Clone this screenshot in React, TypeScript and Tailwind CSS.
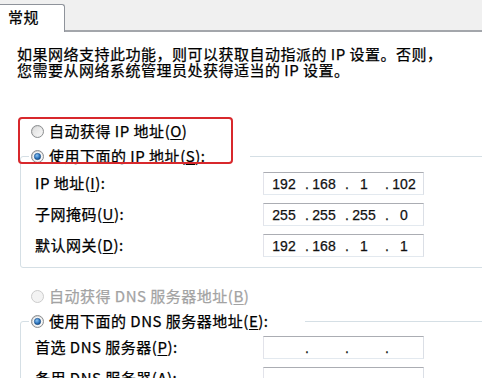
import type { ReactNode } from 'react'

const FONT = { fontFamily: '"Noto Sans CJK SC", "Noto Sans", sans-serif' }
const DIGITS = { fontFamily: '"Liberation Sans", "Noto Sans CJK SC", sans-serif' }

function Radio({ checked, disabled, id }: { checked?: boolean; disabled?: boolean; id: string }) {
  return (
    <svg width="13" height="13" viewBox="0 0 13 13" className="shrink-0">
      <defs>
        <linearGradient id={`f-${id}`} x1="0" y1="0" x2="1" y2="1">
          <stop offset="0" stopColor="#c9c9c9" />
          <stop offset="1" stopColor="#fbfbfb" />
        </linearGradient>
        <radialGradient id={`d-${id}`} cx="0.4" cy="0.35" r="0.7">
          <stop offset="0" stopColor="#8cc4f2" />
          <stop offset="0.6" stopColor="#2f77c0" />
          <stop offset="1" stopColor="#123f73" />
        </radialGradient>
      </defs>
      <circle
        cx="6.5"
        cy="6.5"
        r="6"
        fill={disabled ? '#f3f3f3' : `url(#f-${id})`}
        stroke={disabled ? '#cbcbcb' : '#8c8e90'}
      />
      {!disabled && <circle cx="6.5" cy="6.5" r="4.6" fill="#fdfdfd" opacity={checked ? 1 : 0.35} />}
      {checked && <circle cx="6.5" cy="6.5" r="3.2" fill={`url(#d-${id})`} stroke="#1d4f84" strokeWidth="0.6" />}
    </svg>
  )
}

function Key({ k }: { k: string }) {
  return (
    <>
      (<span className="underline underline-offset-2">{k}</span>)
    </>
  )
}

function IpBox({ parts }: { parts: string[] }) {
  return (
    <div
      className="flex h-[23px] w-[161px] items-center border border-t-[#abadb3] border-l-[#e2e3ea] border-r-[#dbdfe6] border-b-[#e3e9ef] bg-white text-[14px] tracking-normal text-[#111]"
      style={DIGITS}
    >
      {parts.map((p, i) => (
        <div key={i} className="flex w-[40px] shrink-0 items-center leading-[20px]">
          <span className="w-[6px] text-center">{i > 0 ? '.' : ''}</span>
          <span className="w-[28px] text-center">{p}</span>
        </div>
      ))}
    </div>
  )
}

function Row({ label, parts }: { label: ReactNode; parts: string[] }) {
  return (
    <div className="flex h-[23px] items-center">
      <div className="w-[228px] shrink-0 whitespace-nowrap">{label}</div>
      <IpBox parts={parts} />
    </div>
  )
}

function Group({ legend, width, children }: { legend: ReactNode; width: string; children: ReactNode }) {
  return (
    <fieldset className="ml-[3px] w-[480px] rounded-[3px] border border-[#d5dfe5] p-0">
      <legend className={`ml-[8px] flex h-[20px] items-center gap-[5px] pl-[2px] whitespace-nowrap ${width}`}>
        {legend}
      </legend>
      {children}
    </fieldset>
  )
}

export default function App() {
  return (
    <div
      className="relative h-[378px] w-[482px] overflow-hidden bg-white text-[15px] tracking-[0.5px] text-black [-webkit-text-stroke:0.25px]"
      style={FONT}
    >
      <div className="flex h-[32px] items-end bg-[#f0f0f0]">
        <div className="flex h-[28px] w-[65px] shrink-0 items-start rounded-tr-[3px] border-t border-r border-[#8f939b] bg-white pl-[8px] pt-[3px] leading-[18px]">
          常规
        </div>
        <div className="h-full flex-1 border-b-2 border-[#a3a6ab]" />
      </div>

      <div className="pl-[17px]">
        <div className="mt-[14px] whitespace-nowrap leading-[16px]">
          <div>如果网络支持此功能，则可以获取自动指派的 IP 设置。否则，</div>
          <div>您需要从网络系统管理员处获得适当的 IP 设置。</div>
        </div>

        <div className="mt-[43px] ml-[14px] flex h-[20px] items-center gap-[5px] whitespace-nowrap">
          <Radio id="a" />
          <span>
            自动获得 IP 地址<Key k="O" />
          </span>
        </div>

        <div className="mt-[5px]">
          <Group
            width="w-[221px]"
            legend={
              <>
                <Radio id="b" checked />
                <span>
                  使用下面的 IP 地址<Key k="S" />:
                </span>
              </>
            }
          >
            <div className="flex flex-col gap-[8px] pb-[10px] pl-[14px] pt-[6px]">
              <Row label={<>IP 地址<Key k="I" />:</>} parts={['192', '168', '1', '102']} />
              <Row label={<>子网掩码<Key k="U" />:</>} parts={['255', '255', '255', '0']} />
              <Row label={<>默认网关<Key k="D" />:</>} parts={['192', '168', '1', '1']} />
            </div>
          </Group>
        </div>

        <div className="mt-[18px] ml-[14px] flex h-[20px] items-center gap-[5px] whitespace-nowrap text-[#a3a3a3]">
          <Radio id="c" disabled />
          <span>
            自动获得 DNS 服务器地址<Key k="B" />
          </span>
        </div>

        <div className="mt-[5px]">
          <Group
            width="w-[276px]"
            legend={
              <>
                <Radio id="e" checked />
                <span>
                  使用下面的 DNS 服务器地址<Key k="E" />:
                </span>
              </>
            }
          >
            <div className="flex flex-col gap-[8px] pb-[10px] pl-[14px] pt-[5px]">
              <Row label={<>首选 DNS 服务器<Key k="P" />:</>} parts={['', '', '', '']} />
              <Row label={<>备用 DNS 服务器<Key k="A" />:</>} parts={['', '', '', '']} />
            </div>
          </Group>
        </div>
      </div>

      <div className="absolute left-[18px] top-[117px] h-[47px] w-[215px] rounded-[4px] border-2 border-[#d8282c]" />
    </div>
  )
}
